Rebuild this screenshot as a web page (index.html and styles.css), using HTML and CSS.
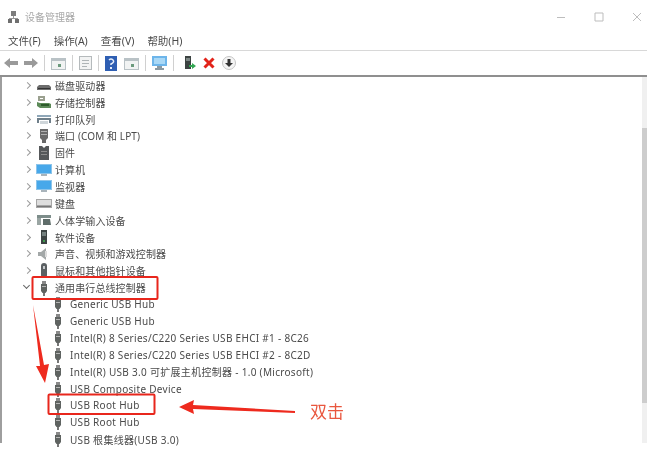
FILE: index.html
```html
<!DOCTYPE html>
<html lang="zh-CN">
<head>
    <meta charset="UTF-8">
    <title>设备管理器</title>
    <link rel="stylesheet" href="styles.css">
</head>
<body>
    <svg class="defs" width="0" height="0">
        <symbol id="i-usb" viewBox="0 0 16 16">
            <path d="M6 1h4v3H6z" fill="#8a8a8a"/>
            <path d="M5 4h6v7l-1.500 2h-3L5 11z" fill="#5f6361"/>
            <path d="M7 13h2v3H7z" fill="#777"/>
            <path d="M6 6h4v1H6z" fill="#b5b5b5"/>
        </symbol>
        <symbol id="i-disk" viewBox="0 0 16 16">
            <path d="M1 10l2-2h10l2 2v3H1z" fill="#6d6d6d"/>
            <path d="M2 11h12v1H2z" fill="#333"/>
        </symbol>
        <symbol id="i-storage" viewBox="0 0 16 16">
            <path d="M2 2h7v5H2z" fill="#9aa08f"/>
            <path d="M4 4h3v1H4z" fill="#fff"/>
            <path d="M1 8l3 1h9l2 1v4H4l-3-2z" fill="#5c8a58"/>
            <path d="M5 10h8v2H5z" fill="#2d5a2b"/>
        </symbol>
        <symbol id="i-printer" viewBox="0 0 16 16">
            <path d="M1 4h14v2H1z" fill="#8fa7b8"/>
            <path d="M1 7h14v5h-2V9H3v3H1z" fill="#6f7f8a"/>
            <path d="M4 10h8v3H4z" fill="#cfd6da"/>
        </symbol>
        <symbol id="i-port" viewBox="0 0 16 16">
            <path d="M4 1h8v9l-2 2v3H6v-3l-2-2z" fill="#696969"/>
            <path d="M5 3h6v1H5zM5 6h6v1H5z" fill="#b0b0b0"/>
        </symbol>
        <symbol id="i-chip" viewBox="0 0 16 16">
            <path d="M3 1h3l2 2 2-2h3v14H3z" fill="#55585a"/>
            <path d="M5 6h6v1H5zM5 9h6v1H5z" fill="#8d8d8d"/>
        </symbol>
        <symbol id="i-screen" viewBox="0 0 16 16">
            <path d="M0 2h16v10H0z" fill="#8cc4ea"/>
            <path d="M1 3h14v8H1z" fill="#47a8ea"/>
            <path d="M5 12h6v2H5z" fill="#a9b4bb"/>
        </symbol>
        <symbol id="i-keyboard" viewBox="0 0 16 16">
            <path d="M0 4h16v9H0z" fill="#a6a6a6"/>
            <path d="M1 5h14v5H1z" fill="#dedede"/>
            <path d="M1 11h14v1H1z" fill="#777"/>
        </symbol>
        <symbol id="i-hid" viewBox="0 0 16 16">
            <path d="M1 3h14v3H1z" fill="#7d8d8a"/>
            <path d="M1 6h4v7H1z" fill="#9aa5a3"/>
            <path d="M7 7h7l1 6H7z" fill="#5f6d6a"/>
        </symbol>
        <symbol id="i-software" viewBox="0 0 16 16">
            <path d="M5 1h6v14H5z" fill="#3d4443"/>
            <path d="M6 3h4v4H6z" fill="#74807e"/>
            <path d="M7 11h2v2H7z" fill="#3f9a4e"/>
        </symbol>
        <symbol id="i-sound" viewBox="0 0 16 16">
            <path d="M2 6h3l5-4v12l-5-4H2z" fill="#a3a8a8"/>
            <path d="M10 5v6" stroke="#dcdcdc" stroke-width="2"/>
        </symbol>
        <symbol id="i-mouse" viewBox="0 0 16 16">
            <path d="M5 3a3 3 0 0 1 6 0v9a3 3 0 0 1-6 0z" fill="#5b6063"/>
            <path d="M7 3h2v3H7z" fill="#c5c9cb"/>
        </symbol>
    </svg>

    <div class="window">
        <header class="titlebar">
            <svg class="title-icon" width="11" height="12" viewBox="0 0 11 12">
                <path d="M3 0h5v5H3z" fill="#7d7d7d"/>
                <path d="M5 5h1v2H5zM1 7h9v1H1z" fill="#999"/>
                <path d="M0 8h4v4H0zM7 8h4v4H7z" fill="#6f6f6f"/>
            </svg>
            <span class="title-text">设备管理器</span>
            <div class="window-controls">
                <svg width="10" height="10" viewBox="0 0 10 10"><path d="M1 5.500h8" stroke="#bdbdbd"/></svg>
                <svg width="10" height="10" viewBox="0 0 10 10"><path d="M1 1h8v8H1z" fill="none" stroke="#bdbdbd"/></svg>
                <svg width="10" height="10" viewBox="0 0 10 10"><path d="M1 1l8 8M9 1l-8 8" stroke="#bdbdbd"/></svg>
            </div>
        </header>

        <nav class="menubar">
            <span>文件(F)</span>
            <span>操作(A)</span>
            <span>查看(V)</span>
            <span>帮助(H)</span>
        </nav>

        <div class="toolbar">
            <svg class="tool" width="14" height="12" viewBox="0 0 14 12"><path d="M0 6l6-5v3h8v4H6v3z" fill="#9a9a9a"/></svg>
            <svg class="tool" width="14" height="12" viewBox="0 0 14 12"><path d="M14 6L8 1v3H0v4h8v3z" fill="#9a9a9a"/></svg>
            <i class="tool-sep"></i>
            <svg class="tool" width="15" height="13" viewBox="0 0 15 13"><path d="M0 1h15v12H0z" fill="#b9c2c6"/><path d="M1 4h13v8H1z" fill="#f1f3f3"/><path d="M7 7h3v3H7z" fill="#6b9a7d"/></svg>
            <i class="tool-sep"></i>
            <svg class="tool" width="13" height="14" viewBox="0 0 13 14"><path d="M0 0h13v14H0z" fill="#b5babc"/><path d="M1 1h11v12H1z" fill="#f2f3f3"/><path d="M3 4h7v1H3zM3 7h7v1H3zM3 10h5v1H3z" fill="#aeb4b6"/></svg>
            <i class="tool-sep"></i>
            <svg class="tool" width="12" height="15" viewBox="0 0 12 15"><path d="M0 0h12v15H0z" fill="#2f5fb3"/><path d="M4 4q2-2 4 0t-2 4v1" fill="none" stroke="#e6eefa" stroke-width="1.500"/><path d="M5 11h2v2H5z" fill="#e6eefa"/></svg>
            <svg class="tool tool-gap" width="15" height="13" viewBox="0 0 15 13"><path d="M0 1h15v12H0z" fill="#b9c2c6"/><path d="M1 4h13v8H1z" fill="#f1f3f3"/><path d="M7 7h3v3H7z" fill="#6b9a7d"/></svg>
            <i class="tool-sep"></i>
            <svg class="tool" width="15" height="15" viewBox="0 0 15 15"><path d="M0 0h15v10H0z" fill="#6db5ea"/><path d="M2 2h11v6H2z" fill="#a9d8f6"/><path d="M5 10h5v2h2v2H3v-2h2z" fill="#8b9aa3"/></svg>
            <i class="tool-sep"></i>
            <svg class="tool tool-wide" width="12" height="15" viewBox="0 0 12 15"><path d="M1 0h6v13H1z" fill="#3c4342"/><path d="M2 2h4v3H2z" fill="#7d8785"/><path d="M8 7l4 3-4 3v-2H5V9h3z" fill="#33a653"/></svg>
            <svg class="tool tool-gap" width="12" height="12" viewBox="0 0 12 12"><path d="M1.500 1.500l9 9M10.500 1.500l-9 9" stroke="#e2231a" stroke-width="3"/></svg>
            <svg class="tool tool-gap" width="14" height="14" viewBox="0 0 14 14"><circle cx="7" cy="7" r="6.500" fill="#f4f4f4" stroke="#c4c4c4"/><path d="M5.500 3h3v4H11l-4 4-4-4h2.500z" fill="#333"/></svg>
        </div>

        <div class="content">
            <ul class="tree">
                <li class="row"><span class="chevron"></span><svg class="icon"><use href="#i-disk"/></svg>磁盘驱动器</li>
                <li class="row"><span class="chevron"></span><svg class="icon"><use href="#i-storage"/></svg>存储控制器</li>
                <li class="row"><span class="chevron"></span><svg class="icon"><use href="#i-printer"/></svg>打印队列</li>
                <li class="row"><span class="chevron"></span><svg class="icon"><use href="#i-port"/></svg>端口 (COM 和 LPT)</li>
                <li class="row"><span class="chevron"></span><svg class="icon"><use href="#i-chip"/></svg>固件</li>
                <li class="row"><span class="chevron"></span><svg class="icon"><use href="#i-screen"/></svg>计算机</li>
                <li class="row"><span class="chevron"></span><svg class="icon"><use href="#i-screen"/></svg>监视器</li>
                <li class="row"><span class="chevron"></span><svg class="icon"><use href="#i-keyboard"/></svg>键盘</li>
                <li class="row"><span class="chevron"></span><svg class="icon"><use href="#i-hid"/></svg>人体学输入设备</li>
                <li class="row"><span class="chevron"></span><svg class="icon"><use href="#i-software"/></svg>软件设备</li>
                <li class="row"><span class="chevron"></span><svg class="icon"><use href="#i-sound"/></svg>声音、视频和游戏控制器</li>
                <li class="row"><span class="chevron"></span><svg class="icon"><use href="#i-mouse"/></svg>鼠标和其他指针设备</li>
                <li class="row"><span class="chevron open"></span><svg class="icon"><use href="#i-usb"/></svg>通用串行总线控制器</li>
                <li class="row child"><svg class="icon"><use href="#i-usb"/></svg>Generic USB Hub</li>
                <li class="row child"><svg class="icon"><use href="#i-usb"/></svg>Generic USB Hub</li>
                <li class="row child"><svg class="icon"><use href="#i-usb"/></svg>Intel(R) 8 Series/C220 Series USB EHCI #1 - 8C26</li>
                <li class="row child"><svg class="icon"><use href="#i-usb"/></svg>Intel(R) 8 Series/C220 Series USB EHCI #2 - 8C2D</li>
                <li class="row child"><svg class="icon"><use href="#i-usb"/></svg>Intel(R) USB 3.0 可扩展主机控制器 - 1.0 (Microsoft)</li>
                <li class="row child"><svg class="icon"><use href="#i-usb"/></svg>USB Composite Device</li>
                <li class="row child"><svg class="icon"><use href="#i-usb"/></svg>USB Root Hub</li>
                <li class="row child"><svg class="icon"><use href="#i-usb"/></svg>USB Root Hub</li>
                <li class="row child"><svg class="icon"><use href="#i-usb"/></svg>USB 根集线器(USB 3.0)</li>
            </ul>
            <div class="scrollbar"><div class="thumb"></div></div>
        </div>
    </div>

    <!-- red marks drawn on top of the screenshot -->
    <svg class="marks" width="655" height="455" viewBox="0 0 655 455">
        <rect x="32.500" y="277" width="125" height="22" rx="1" fill="none" stroke="#e8261c" stroke-width="2"/>
        <rect x="48.500" y="394.500" width="106" height="19.500" rx="1" fill="none" stroke="#e8261c" stroke-width="2"/>
        <path d="M33 305L40 366 36 366 45 383 49 364 44 365z" fill="#ee2a1e"/>
        <path d="M179 407L194 400 193 405 295 411 295 413 193 409 194 414z" fill="#ee2a1e"/>
    </svg>
    <span class="note">双击</span>
</body>
</html>
```

FILE: styles.css
```css
html, body {
    margin: 0;
    background: #fff;
}
body {
    width: 655px;
    height: 455px;
    overflow: hidden;
    position: relative;
    font-family: "Noto Sans", "Noto Sans CJK SC", sans-serif;
    color: #4a4a4a;
}
.defs {
    position: absolute;
}
.window {
    width: 647px;
    height: 443px;
    display: flex;
    flex-direction: column;
    filter: blur(0.7px);
}

.titlebar {
    height: 33px;
    flex: none;
    display: flex;
    align-items: center;
    padding-left: 8px;
}
.title-text {
    margin-left: 6px;
    font-size: 10px;
    color: #a8a8a8;
}
.window-controls {
    margin-left: auto;
    display: flex;
    gap: 28px;
    padding-right: 5px;
}

.menubar {
    height: 15px;
    flex: none;
    display: flex;
    align-items: center;
    gap: 13px;
    padding-left: 8px;
    padding-bottom: 2px;
    font-size: 10.500px;
    border-bottom: 1px solid #d8d8d8;
}

.toolbar {
    height: 24px;
    flex: none;
    display: flex;
    align-items: center;
    padding-left: 4px;
    background: #fff;
    border-bottom: 2px solid #8f8f8f;
}
.tool {
    flex: none;
    margin-right: 6px;
}
.tool-gap {
    margin-left: 1px;
}
.tool-wide {
    margin-left: 4px;
}
.tool-sep {
    width: 1px;
    height: 16px;
    background: #d0d0d0;
    margin-right: 6px;
    flex: none;
}

.content {
    flex: 1;
    min-height: 0;
    display: flex;
    border-left: 2px solid #9e9e9e;
}
.tree {
    flex: 1;
    margin: 0;
    padding: 0;
    list-style: none;
    font-size: 10px;
}
.row {
    height: 16.850px;
    display: flex;
    align-items: center;
    white-space: nowrap;
    padding-left: 23px;
    letter-spacing: 0.1px;
}
.row.child {
    padding-left: 48px;
    letter-spacing: 0.3px;
}
.chevron {
    width: 9px;
    height: 9px;
    flex: none;
    position: relative;
}
.chevron::before {
    content: "";
    position: absolute;
    left: 0;
    top: 2px;
    width: 4px;
    height: 4px;
    border-top: 1px solid #9a9a9a;
    border-right: 1px solid #9a9a9a;
    transform: rotate(45deg);
}
.chevron.open::before {
    left: -1px;
    top: 0;
    border-color: #666;
    transform: rotate(135deg);
}
.icon {
    width: 16px;
    height: 16px;
    flex: none;
    margin: 0 3px 0 2px;
}
.child .icon {
    margin: 0 4px 0 0;
}

.scrollbar {
    width: 5px;
    flex: none;
    padding-top: 51px;
    background: #f0f0f0;
}
.thumb {
    height: 275px;
    background: #cdcdcd;
}

.marks {
    position: absolute;
    left: 0;
    top: 0;
    filter: blur(0.4px);
}
.note {
    position: absolute;
    left: 310px;
    top: 400px;
    font-size: 17px;
    line-height: 24px;
    color: #e9573f;
    filter: blur(0.4px);
}
```
